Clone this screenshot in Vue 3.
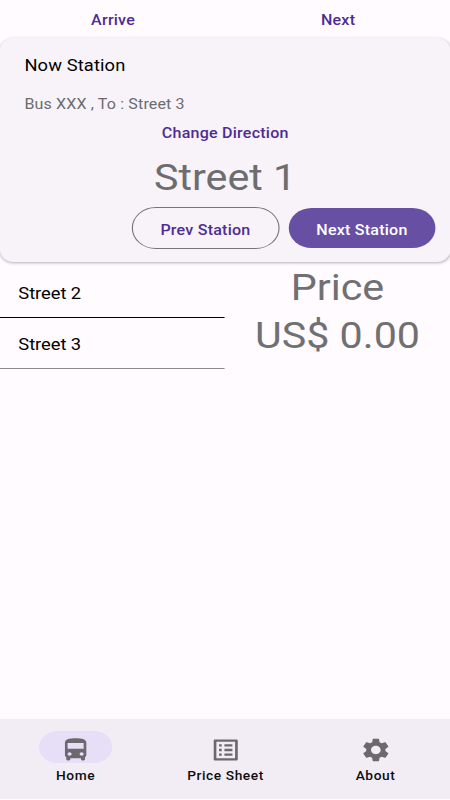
<template>
  <div class="screen">
    <div class="actions">
      <button class="text-btn">Arrive</button>
      <button class="text-btn">Next</button>
    </div>

    <div class="card">
      <div class="card-title">Now Station</div>
      <div class="card-sub">Bus XXX , To : {{ terminal }}</div>
      <button class="text-btn change">Change Direction</button>
      <div class="display">{{ stations[current] }}</div>
      <div class="card-buttons">
        <button class="btn outlined" @click="prev">Prev Station</button>
        <button class="btn filled" @click="next">Next Station</button>
      </div>
    </div>

    <div class="content">
      <ul class="list">
        <li v-for="name in upcoming" :key="name">{{ name }}</li>
      </ul>
      <div class="price">
        <div>Price</div>
        <div>US$ 0.00</div>
      </div>
    </div>

    <nav class="nav">
      <div
        v-for="tab in tabs"
        :key="tab.label"
        class="nav-item"
        :class="{ active: tab.label === activeTab }"
        @click="activeTab = tab.label"
      >
        <div class="pill">
          <svg viewBox="0 0 24 24" width="28" height="28"><path :d="tab.icon" /></svg>
        </div>
        <span>{{ tab.label }}</span>
      </div>
    </nav>
  </div>
</template>

<script setup>
import { ref, computed } from 'vue'

const stations = ['Street 1', 'Street 2', 'Street 3']
const current = ref(0)
const activeTab = ref('Home')

const terminal = computed(() => stations[stations.length - 1])
const upcoming = computed(() => stations.slice(current.value + 1))

const prev = () => {
  if (current.value > 0) current.value--
}

const next = () => {
  if (current.value < stations.length - 1) current.value++
}

const tabs = [
  {
    label: 'Home',
    icon: 'M4 16c0 .88.39 1.67 1 2.22V20c0 .55.45 1 1 1h1c.55 0 1-.45 1-1v-1h8v1c0 .55.45 1 1 1h1c.55 0 1-.45 1-1v-1.78c.61-.55 1-1.34 1-2.22V6c0-3.5-3.58-4-8-4s-8 .5-8 4v10zm3.5 1c-.83 0-1.5-.67-1.5-1.5S6.67 14 7.5 14s1.5.67 1.5 1.5S8.33 17 7.5 17zm9 0c-.83 0-1.5-.67-1.5-1.5s.67-1.5 1.5-1.5 1.5.67 1.5 1.5-.67 1.5-1.5 1.5zm1.5-6H6V6h12v5z'
  },
  {
    label: 'Price Sheet',
    icon: 'M19 5v14H5V5h14m1.1-2H3.9c-.5 0-.9.4-.9.9v16.2c0 .4.4.9.9.9h16.2c.4 0 .9-.5.9-.9V3.9c0-.5-.5-.9-.9-.9zM11 7h6v2h-6V7zm0 4h6v2h-6v-2zm0 4h6v2h-6zM7 7h2v2H7zm0 4h2v2H7zm0 4h2v2H7z'
  },
  {
    label: 'About',
    icon: 'M19.14 12.94c.04-.3.06-.61.06-.94 0-.32-.02-.64-.07-.94l2.03-1.58c.18-.14.23-.41.12-.61l-1.92-3.32c-.12-.22-.37-.29-.59-.22l-2.39.96c-.5-.38-1.03-.7-1.62-.94l-.36-2.54c-.04-.24-.24-.41-.48-.41h-3.84c-.24 0-.43.17-.47.41l-.36 2.54c-.59.24-1.13.57-1.62.94l-2.39-.96c-.22-.08-.47 0-.59.22L2.74 8.87c-.12.21-.08.47.12.61l2.03 1.58c-.05.3-.09.63-.09.94s.02.64.07.94l-2.03 1.58c-.18.14-.23.41-.12.61l1.92 3.32c.12.22.37.29.59.22l2.39-.96c.5.38 1.03.7 1.62.94l.36 2.54c.05.24.24.41.48.41h3.84c.24 0 .44-.17.47-.41l.36-2.54c.59-.24 1.13-.56 1.62-.94l2.39.96c.22.08.47 0 .59-.22l1.92-3.32c.12-.22.07-.47-.12-.61l-2.01-1.58zM12 15.6c-1.98 0-3.6-1.62-3.6-3.6s1.62-3.6 3.6-3.6 3.6 1.62 3.6 3.6-1.62 3.6-3.6 3.6z'
  }
]
</script>

<style>
body {
  background: #fffbff;
  overflow: hidden;
}
</style>

<style scoped>
.screen {
  display: flex;
  flex-direction: column;
  box-sizing: border-box;
  width: 392.7px;
  height: 800px;
  padding-bottom: 1px;
  transform: scaleX(1.1459);
  transform-origin: 0 0;
  background: #fffbff;
  font-family: Roboto, sans-serif;
  color: #000;
}

button {
  margin: 0;
  padding: 0;
  border: none;
  background: none;
  font-family: inherit;
  cursor: pointer;
}

.text-btn,
.btn {
  font-size: 14px;
  font-weight: 500;
  letter-spacing: 0.2px;
  color: #4f2b93;
}

.actions {
  display: flex;
  height: 38px;
}

.actions .text-btn {
  flex: 1;
  padding: 2px 0 0 1px;
}

.card {
  display: flex;
  flex-direction: column;
  box-sizing: border-box;
  height: 224px;
  padding: 16px 12.5px 10px 21.3px;
  border-radius: 12px;
  background: #f7f3f9;
  box-shadow: 0 1px 3px rgba(0, 0, 0, 0.3);
}

.card-title {
  font-size: 16px;
  line-height: 24px;
  letter-spacing: 0.1px;
}

.card-sub {
  margin-top: 16px;
  font-size: 14px;
  line-height: 20px;
  letter-spacing: 0.12px;
  color: #6c6b6e;
}

.change {
  height: 38px;
  margin-left: -8.3px;
}

.display {
  height: 52px;
  margin-left: -8.6px;
  font-size: 36px;
  line-height: 53px;
  text-align: center;
  color: #6d6c6f;
}

.card-buttons {
  display: flex;
  justify-content: flex-end;
  align-items: center;
  gap: 8px;
  height: 48px;
}

.btn {
  box-sizing: border-box;
  width: 128.6px;
  height: 40px;
  padding-top: 3px;
  border-radius: 20px;
}

.outlined {
  height: 42px;
  border: 1px solid #77737b;
  border-radius: 21px;
}

.filled {
  background: #6750a4;
  color: #fff;
}

.content {
  display: flex;
  flex: 1;
}

.list {
  flex: 1;
  margin: 0;
  padding: 5px 0 0;
  list-style: none;
}

.list li {
  height: 50px;
  padding-left: 16px;
  border-bottom: 1px solid #000;
  font-size: 16px;
  line-height: 53px;
  letter-spacing: -0.05px;
}

.list li:last-child {
  border-bottom-color: #8b898c;
}

.price {
  flex: 1;
  padding-top: 2px;
  font-size: 36px;
  line-height: 48px;
  text-align: center;
  color: #707073;
}

.nav {
  display: flex;
  height: 80px;
  background: #f2edf5;
}

.nav-item {
  display: flex;
  flex: 1;
  flex-direction: column;
  align-items: center;
  padding: 12px 0 0 1px;
  font-size: 12px;
  font-weight: 500;
  line-height: 16px;
  letter-spacing: 0.5px;
  color: #0e0d10;
  cursor: pointer;
}

.pill {
  display: flex;
  align-items: center;
  justify-content: center;
  width: 64px;
  height: 32px;
  margin-bottom: 5px;
  border-radius: 16px;
}

.pill svg {
  margin-top: 5px;
  flex-shrink: 0;
  fill: #6b686e;
}

.active .pill {
  background: #e7def8;
}
</style>
